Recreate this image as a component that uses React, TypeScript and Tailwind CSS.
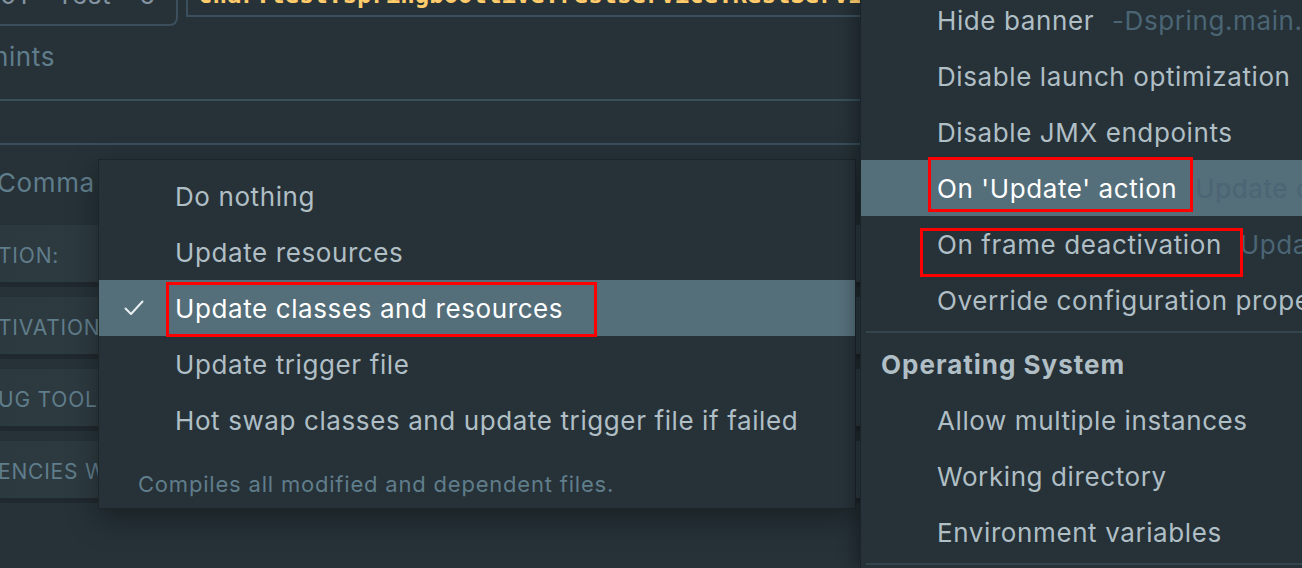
import React from 'react'

// options of the "On 'Update' action" popup
const updateOptions = [
  'Do nothing',
  'Update resources',
  'Update classes and resources',
  'Update trigger file',
  'Hot swap classes and update trigger file if failed',
]

type MenuItem = {
  label: string
  hint?: string
  selected?: boolean
  box?: 'update' | 'frame'
}

const springItems: MenuItem[] = [
  { label: 'Hide banner', hint: '-Dspring.main.banner-mode=off' },
  { label: 'Disable launch optimization' },
  { label: 'Disable JMX endpoints' },
  { label: "On 'Update' action", hint: 'Update classes and resources', selected: true, box: 'update' },
  { label: 'On frame deactivation', hint: 'Update classes and resources', box: 'frame' },
  { label: 'Override configuration properties' },
]

const osItems = ['Allow multiple instances', 'Working directory', 'Environment variables']

const sideRows = ['TION:', 'TIVATION', 'UG TOOL', 'ENCIES W']

function Check() {
  return (
    <svg width="20" height="16" viewBox="0 0 20 16" fill="none" className="absolute left-[25px] top-[20px]">
      <polyline points="1.5,8.5 7,14 18.5,1.5" stroke="#e8eef1" strokeWidth="2" strokeLinecap="round" strokeLinejoin="round" />
    </svg>
  )
}

function Separator() {
  return (
    <div className="h-[8px] flex items-center pl-[5px]">
      <div className="h-[2px] w-full bg-[#34444d]" />
    </div>
  )
}

export default function App() {
  return (
    <div className="w-[1302px] h-[568px] overflow-hidden bg-[#263238] flex font-['Inter',sans-serif] text-[#b0bec5] tracking-[0.6px]">
      {/* run configuration form (behind the popups) */}
      <div className="w-[860px] shrink-0 relative overflow-hidden">
        <div className="flex items-start h-[26px]">
          <div className="w-[188px] -ml-[10px] h-[26px] border-2 border-t-0 border-[#3b505c] rounded-br-[8px] overflow-hidden">
            <div className="-mt-[19px] pl-[8px] text-[26px] leading-[28px] text-[#8393a0] whitespace-nowrap">01 - Test - c</div>
          </div>
          <div className="ml-[8px] flex-1 h-[17px] border-l-2 border-b-2 border-[#3b505c] overflow-hidden">
            <div className="-mt-[19px] pl-[10px] font-['DejaVu_Sans_Mono',monospace] font-bold text-[24px] leading-[28px] tracking-normal text-[#ffcb6b] whitespace-nowrap">
              char.test.springbootlive.restservice.RestServiceApplication
            </div>
          </div>
        </div>

        <div className="mt-[15px] -ml-[7px] text-[26px] leading-[32px] text-[#607d8b]">hints</div>
        <div className="mt-[26px] h-[2px] bg-[#37505c]" />
        <div className="mt-[42px] h-[2px] bg-[#37505c]" />

        <div className="mt-[22px] -ml-[3px] text-[26px] leading-[32px] text-[#607d8b] whitespace-nowrap">Comma separated</div>

        <div className="mt-[26px] flex flex-col gap-[10px]">
          {sideRows.map((row, i) => (
            <div
              key={row}
              className="h-[62px] pt-[4px] flex items-center bg-gradient-to-r from-[#2c393f] to-[#33434b] border-b-[5px] border-[#20292e]"
            >
              <span className="-ml-[2px] text-[21px] tracking-[0.8px] text-[#607d8b]">{row}</span>
              {i === 0 && <span className="ml-[40px] text-[21px] text-[#26a69a]">Update</span>}
            </div>
          ))}
        </div>

        {/* update action dropdown */}
        <div className="absolute left-[98px] top-[159px] w-[758px] h-[350px] bg-[#263238] border border-[#1c2529] shadow-[0_10px_28px_rgba(0,0,0,0.35)] pt-[8px]">
          {updateOptions.map((opt, i) => (
            <div
              key={opt}
              className={`relative h-[56px] flex items-center pl-[76px] text-[26px] whitespace-nowrap ${i === 2 ? 'bg-[#546e7a] text-white' : ''}`}
            >
              {i === 2 && <Check />}
              {opt}
              {i === 2 && (
                <div className="absolute left-[67px] top-[2px] w-[431px] h-[55px] border-[3px] border-[#ff0000]" />
              )}
            </div>
          ))}
          <div className="pt-[20px] pl-[39px] text-[22px] leading-[32px] tracking-[0.8px] text-[#607d8b]">
            Compiles all modified and dependent files.
          </div>
        </div>
      </div>

      {/* modify options popup */}
      <div className="flex-1 border-l border-[#1b2428] bg-[#263238] overflow-hidden shadow-[-6px_0_14px_rgba(0,0,0,0.3)] z-10">
        <div className="-mt-[8px] flex flex-col">
          {springItems.map((item) => (
            <div
              key={item.label}
              className={`relative h-[56px] flex items-center pl-[76px] text-[26px] whitespace-nowrap ${item.selected ? 'bg-[#546e7a] text-white' : ''}`}
            >
              {item.label}
              {item.hint && <span className="ml-[18px] text-[#4b6574]">{item.hint}</span>}
              {item.box === 'update' && (
                <div className="absolute left-[67px] -top-[3px] w-[265px] h-[55px] border-[3px] border-[#ff0000] z-10" />
              )}
              {item.box === 'frame' && (
                <div className="absolute left-[59px] top-[12px] w-[323px] h-[49px] border-[3px] border-[#ff0000] z-10" />
              )}
            </div>
          ))}
          <Separator />
          <div className="h-[56px] flex items-center pl-[20px] text-[26px] font-bold tracking-[1px]">Operating System</div>
          {osItems.map((label) => (
            <div key={label} className="h-[56px] flex items-center pl-[76px] text-[26px] whitespace-nowrap">
              {label}
            </div>
          ))}
          <Separator />
        </div>
      </div>
    </div>
  )
}
